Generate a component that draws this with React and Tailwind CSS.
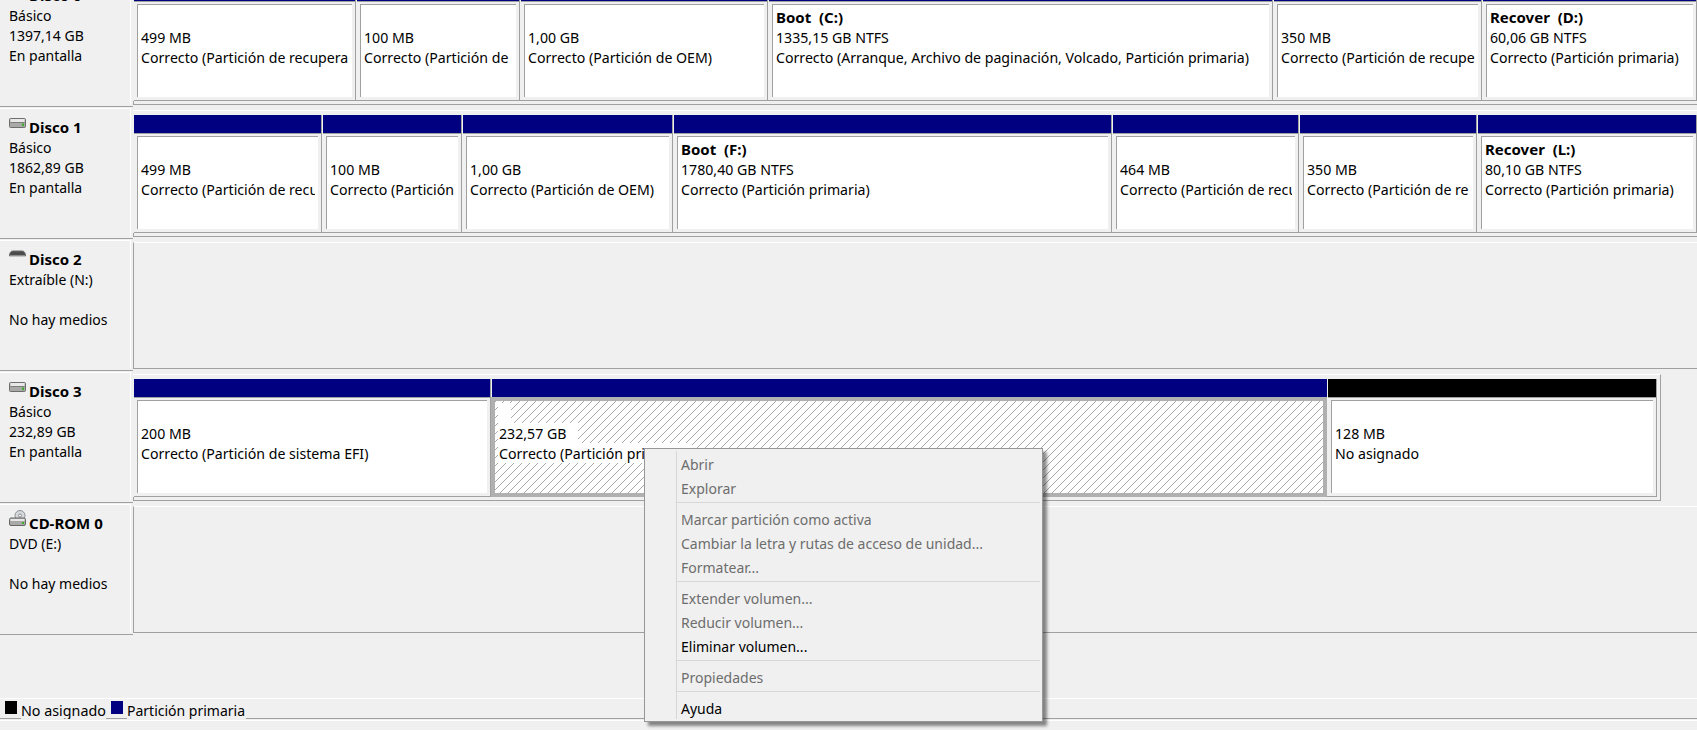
import React from 'react';

const HddIcon = () => (
  <svg width="17" height="11" viewBox="0 0 17 11" className="shrink-0 -mt-px">
    <rect x="0.5" y="1.5" width="16" height="9" rx="1" fill="#a9aaa8" stroke="#6e6f6d" />
    <rect x="1.5" y="2" width="14" height="3" fill="#e8e8e8" />
    <rect x="1.5" y="5" width="14" height="1" fill="#7d7e7c" />
    <rect x="13" y="6.5" width="2" height="2.5" fill="#3fae2a" />
  </svg>
);

const RemovableIcon = () => (
  <svg width="17" height="8" viewBox="0 0 17 8" className="shrink-0">
    <path d="M0.5 6 C0.5 2.5 2 1 4 1 L13 1 C15 1 16.5 2.5 16.5 6 Z" fill="#4c4c4c" stroke="#6b6b6b" />
    <rect x="1" y="5.5" width="15" height="1.5" fill="#c4c4c4" />
  </svg>
);

const CdIcon = () => (
  <svg width="18" height="16" viewBox="0 0 18 16" className="shrink-0 -mt-1">
    <circle cx="11" cy="5.5" r="5" fill="#d5d9dc" stroke="#8b8f92" />
    <circle cx="11" cy="5.5" r="1.5" fill="#f4f4f4" stroke="#8b8f92" />
    <rect x="0.5" y="8" width="16" height="7.5" rx="1.5" fill="#a9aaa8" stroke="#666865" />
    <rect x="1.5" y="9" width="14" height="2" fill="#e8e8e8" />
    <rect x="13" y="12" width="2" height="2" fill="#3fae2a" />
  </svg>
);

const rows = [
  {
    name: 'Disco 0', icon: <HddIcon />, lines: ['Básico', '1397,14 GB', 'En pantalla'],
    segs: [
      { w: 'w-[222px]', first: true, size: '499 MB', status: 'Correcto (Partición de recupera' },
      { w: 'w-[164px]', size: '100 MB', status: 'Correcto (Partición de' },
      { w: 'w-[248px]', size: '1,00 GB', status: 'Correcto (Partición de OEM)' },
      { w: 'w-[505px]', bold: 'Boot  (C:)', size: '1335,15 GB NTFS', status: 'Correcto (Arranque, Archivo de paginación, Volcado, Partición primaria)' },
      { w: 'w-[209px]', size: '350 MB', status: 'Correcto (Partición de recupe' },
      { w: 'flex-1', bold: 'Recover  (D:)', size: '60,06 GB NTFS', status: 'Correcto (Partición primaria)' },
    ],
  },
  {
    name: 'Disco 1', icon: <HddIcon />, lines: ['Básico', '1862,89 GB', 'En pantalla'],
    segs: [
      { w: 'w-[188px]', first: true, size: '499 MB', status: 'Correcto (Partición de recu' },
      { w: 'w-[140px]', size: '100 MB', status: 'Correcto (Partición' },
      { w: 'w-[211px]', size: '1,00 GB', status: 'Correcto (Partición de OEM)' },
      { w: 'w-[439px]', bold: 'Boot  (F:)', size: '1780,40 GB NTFS', status: 'Correcto (Partición primaria)' },
      { w: 'w-[187px]', size: '464 MB', status: 'Correcto (Partición de recu' },
      { w: 'w-[178px]', size: '350 MB', status: 'Correcto (Partición de re' },
      { w: 'flex-1', bold: 'Recover  (L:)', size: '80,10 GB NTFS', status: 'Correcto (Partición primaria)' },
    ],
  },
  { name: 'Disco 2', icon: <RemovableIcon />, lines: ['Extraíble (N:)', '', 'No hay medios'] },
  {
    name: 'Disco 3', icon: <HddIcon />, lines: ['Básico', '232,89 GB', 'En pantalla'], boxW: 'w-[1528px] border-r',
    segs: [
      { w: 'w-[357px]', first: true, size: '200 MB', status: 'Correcto (Partición de sistema EFI)' },
      { w: 'w-[836px]', selected: true, size: '232,57 GB', status: 'Correcto (Partición primaria)' },
      { w: 'w-[330px]', black: true, size: '128 MB', status: 'No asignado' },
    ],
  },
  { name: 'CD-ROM 0', icon: <CdIcon />, lines: ['DVD (E:)', '', 'No hay medios'] },
];

const menu = [
  ['Abrir', 'Explorar'],
  ['Marcar partición como activa', 'Cambiar la letra y rutas de acceso de unidad...', 'Formatear...'],
  ['Extender volumen...', 'Reducir volumen...', 'Eliminar volumen...'],
  ['Propiedades'],
  ['Ayuda'],
];
const enabled = ['Eliminar volumen...', 'Ayuda'];

const Segment = ({ seg }) => {
  if (seg.selected) {
    return (
      <div className={`${seg.w} shrink-0 h-[118px]`}>
        <div className="ml-px h-[18px] bg-[#000080]"></div>
        <div className="h-[100px] border-4 border-[#b0b0b0] bg-[repeating-linear-gradient(135deg,#a8a8a8_0,#a8a8a8_1px,#fff_1px,#fff_5.66px)] pt-[2px] pl-[3px] whitespace-nowrap overflow-hidden text-[14.15px]">
          <div className="h-5 w-[13px] bg-white"></div>
          <div className="h-5 w-fit bg-white pt-px pl-px pr-3">{seg.size}</div>
          <div className="h-5 w-fit bg-white pt-px pl-px pr-1">{seg.status}</div>
        </div>
      </div>
    );
  }
  return (
    <div className={`${seg.w} shrink-0 h-[118px] border-r border-b border-[#a0a0a0] flex flex-col`}>
      <div className={`h-[19px] border-b border-[#a0a0a0] ${seg.first ? '' : 'ml-px'} ${seg.black ? 'bg-black' : 'bg-[#000080]'}`}></div>
      <div className={`mt-[2px] h-[93px] mr-[3px] ${seg.first ? 'ml-[3px]' : 'ml-1'} bg-white border-l border-t border-[#a0a0a0] pt-[2px] pl-[3px] pr-[3px]`}>
        <div className="whitespace-pre overflow-hidden text-[14.15px]">
          <div className="h-5 font-bold text-[15px]">{seg.bold || ' '}</div>
          <div className="h-5 pt-px">{seg.size}</div>
          <div className="h-6 pt-px">{seg.status}</div>
        </div>
      </div>
    </div>
  );
};

const DiskRow = ({ row }) => (
  <div className="flex h-[132px] shrink-0">
    <div className="w-[133px] shrink-0 border-b border-[#a0a0a0]">
      <div className="w-[131px] h-[128px] mt-px border-t border-r border-white pt-[9px] pl-[9px] whitespace-nowrap">
        <div className="flex h-5 gap-[3px] relative">
          <div className="w-[17px] flex items-start">{row.icon}</div>
          <span className="font-bold text-[15px] -mt-px">{row.name}</span>
        </div>
        {row.lines.map((line, i) => (
          <div key={i} className="h-5">{line}</div>
        ))}
      </div>
    </div>
    <div className="flex-1 min-w-0 pt-[2px]">
      {row.segs ? (
        <div className={`h-[127px] mt-px ${row.boxW || ''} border-t border-b border-t-white border-[#a0a0a0] pt-1`}>
          <div className="flex ml-px">
            {row.segs.map((seg, i) => (
              <Segment key={i} seg={seg} />
            ))}
          </div>
          <div className="h-[3px] border-l border-[#a0a0a0]"></div>
        </div>
      ) : (
        <div className="h-[127px] mt-px border-t border-b border-l border-t-white border-[#a0a0a0]"></div>
      )}
    </div>
  </div>
);

const App = () => {
  return (
    <div className="relative flex flex-col h-[730px] overflow-hidden bg-[#f0f0f0] text-black text-[14px] leading-5 font-['Noto_Sans',sans-serif]">
      <div className="-mt-[25px] shrink-0">
        {rows.map((row) => (
          <DiskRow key={row.name} row={row} />
        ))}
      </div>

      <div className="mt-auto mb-[9px] border-t border-white border-b pb-px">
        <div className="flex h-5">
          <div className="w-[21px] border-b border-[#a0a0a0] pl-[5px] pt-[2px]">
            <div className="w-[12px] h-[13px] bg-black"></div>
          </div>
          <div className="w-[85px] pt-[2px] overflow-hidden text-[14.3px]">No asignado</div>
          <div className="w-[21px] border-b border-[#a0a0a0] pl-[5px] pt-[2px]">
            <div className="w-[12px] h-[13px] bg-[#000080]"></div>
          </div>
          <div className="w-[119px] pt-[2px] overflow-hidden">Partición primaria</div>
          <div className="flex-1 border-b border-[#a0a0a0]"></div>
        </div>
      </div>

      <div className="absolute left-[644px] top-[448px] w-[399px] h-[274px] flex p-[2px] bg-[#f0f0f0] border border-[#979797] shadow-[4px_4px_3px_rgba(0,0,0,0.45)]">
        <div className="w-[30px] border-r border-[#d7d7d7]"></div>
        <div className="flex-1">
          {menu.map((group, i) => (
            <div key={i}>
              {i > 0 && <div className="my-[3px] h-px bg-[#d7d7d7]"></div>}
              {group.map((item) => (
                <div key={item} className={`h-6 pl-1 pt-[2px] leading-6 ${enabled.includes(item) ? 'text-black' : 'text-[#6d6d6d]'}`}>{item}</div>
              ))}
            </div>
          ))}
        </div>
      </div>
    </div>
  );
};

export default App;
